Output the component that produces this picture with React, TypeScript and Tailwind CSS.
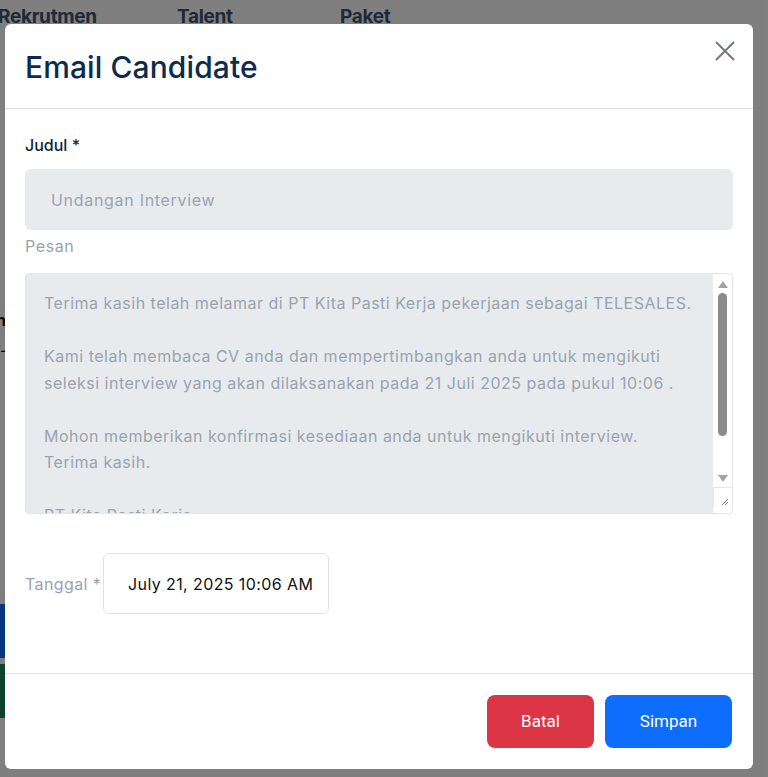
const pesan = [
  "Terima kasih telah melamar di PT Kita Pasti Kerja pekerjaan sebagai TELESALES.",
  "",
  "Kami telah membaca CV anda dan mempertimbangkan anda untuk mengikuti seleksi interview yang akan dilaksanakan pada 21 Juli 2025 pada pukul 10:06 .",
  "",
  "Mohon memberikan konfirmasi kesediaan anda untuk mengikuti interview.",
  "Terima kasih.",
  "",
  "PT Kita Pasti Kerja",
]

function App() {
  return (
    <div className="relative h-[777px] w-full overflow-hidden bg-white font-['Inter',sans-serif]">
      {/* halaman di belakang modal */}
      <div className="flex pt-[3px] text-[19px] font-bold tracking-[-0.3px] text-[#3f5270]">
        <span className="-ml-[2px] w-[179px]">Rekrutmen</span>
        <span className="w-[163px]">Talent</span>
        <span>Paket</span>
      </div>
      <div className="mt-[276px] flex flex-col gap-[6px] text-[16px] text-[#111]">
        <span className="-ml-[4px] font-bold">n</span>
        <span>-</span>
      </div>
      <div className="mt-[242px] h-[54px] w-[12px] bg-[#0d6efd]" />
      <div className="mt-[6px] h-[54px] w-[12px] bg-[#198754]" />

      {/* backdrop */}
      <div className="absolute inset-0 bg-black/50" />

      {/* modal */}
      <div className="absolute left-[5px] top-[24px] flex w-[748px] flex-col rounded-[6px] bg-white">
        <div className="flex h-[85px] items-center justify-between border-b border-[#dee2e6] pl-[20px] pr-[18px]">
          <h2 className="pt-[2px] text-[30px] font-medium tracking-[0.1px] text-[#0c2b4e]">Email Candidate</h2>
          <svg className="mb-[30px]" width="20" height="20" viewBox="0 0 20 20">
            <path d="M1 1 L19 19 M19 1 L1 19" stroke="#6c757d" strokeWidth="1.8" />
          </svg>
        </div>

        <div className="flex flex-col px-[20px] pt-[24px] pb-[59px]">
          <label className="text-[16px] leading-[24px] font-medium text-[#0f2445]">Judul *</label>
          <div className="mt-[12px] flex h-[61px] items-center rounded-[6px] bg-[#e8ebee] px-[26px] text-[16px] tracking-[0.7px] text-[#9aa3ad]">
            Undangan Interview
          </div>
          <label className="mt-[4px] text-[16px] leading-[24px] tracking-[0.6px] text-[#9aa3ad]">Pesan</label>
          <div className="mt-[15px] flex h-[241px] overflow-hidden rounded-[4px] border border-[#e3e6ea] bg-[#e8ebee]">
            <div className="flex-1 overflow-hidden pl-[18px] pr-[12px] pt-[16px] text-[16px] leading-[26.5px] tracking-[0.5px] text-[#9aa3ad]">
              {pesan.map((line, i) => (
                <p key={i} className="min-h-[26.5px]">{line}</p>
              ))}
            </div>
            <div className="flex w-[19px] flex-col items-center bg-white">
              <div className="mt-[7px] h-0 w-0 border-x-[5px] border-b-[7px] border-x-transparent border-b-[#a3a3a3]" />
              <div className="mt-[5px] h-[143px] w-[9px] rounded-full bg-[#8b8b8b]" />
              <div className="mt-[39px] h-0 w-0 border-x-[5px] border-t-[7px] border-x-transparent border-t-[#a3a3a3]" />
              <div className="mt-[5px] flex h-[21px] w-full items-end justify-end border-t border-l border-[#e3e6ea] pr-[3px] pb-[2px]">
                <svg width="8" height="8" viewBox="0 0 8 8">
                  <path d="M7 1 L1 7 M7 4 L4 7" stroke="#777" strokeWidth="1" />
                </svg>
              </div>
            </div>
          </div>

          <div className="mt-[39px] flex items-center">
            <span className="w-[78px] text-[16px] tracking-[0.4px] text-[#9aa3ad]">Tanggal *</span>
            <div className="flex h-[61px] w-[226px] items-center whitespace-nowrap rounded-[6px] border border-[#dee2e6] pl-[24px] text-[16px] tracking-[0.4px] text-[#111]">
              July 21, 2025 10:06 AM
            </div>
          </div>
        </div>

        <div className="flex justify-end gap-[11px] border-t border-[#dee2e6] pt-[21px] pr-[21px] pb-[21px]">
          <button className="h-[53px] w-[107px] rounded-[8px] bg-[#dc3545] font-['Roboto',sans-serif] text-[17px] text-white">
            Batal
          </button>
          <button className="h-[53px] w-[127px] rounded-[8px] bg-[#0d6efd] font-['Roboto',sans-serif] text-[17px] text-white">
            Simpan
          </button>
        </div>
      </div>
    </div>
  )
}

export default App
